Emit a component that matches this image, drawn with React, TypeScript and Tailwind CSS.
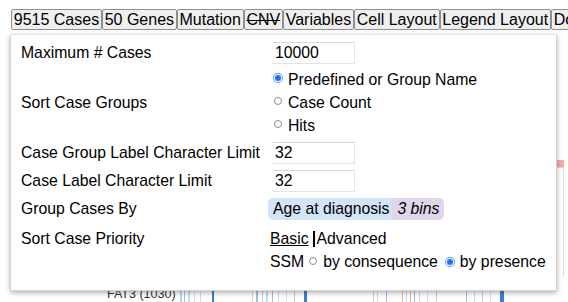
import React from "react";

const tabs = [
  { t: "9515 Cases" },
  { t: "50 Genes" },
  { t: "Mutation" },
  { t: "CNV", strike: true },
  { t: "Variables" },
  { t: "Cell Layout" },
  { t: "Legend Layout" },
  { t: "Download" },
];

function Radio({ checked }: { checked?: boolean }) {
  if (checked) {
    return (
      <span className="relative inline-flex w-[10px] h-[10px] shrink-0 rounded-full bg-[#5b9bf5] items-center justify-center -translate-y-[2px]">
        <span className="w-[8px] h-[8px] rounded-full bg-white flex items-center justify-center">
          <span className="w-[6px] h-[6px] rounded-full bg-[#1a73f0]" />
        </span>
      </span>
    );
  }
  return (
    <span className="inline-block w-[8px] h-[8px] shrink-0 rounded-full border border-[#8a8a8a] bg-white -translate-y-[2px]" />
  );
}

function Input({ v }: { v: string }) {
  return (
    <div className="ml-[2px] w-[83px] h-[22px] border border-[#e4e4e4] border-l-white border-t-[#d8d8d8] flex items-center pl-[2px] text-black">
      {v}
    </div>
  );
}

const bars = [
  [180, "#b9d3ef", 2], [184, "#9cc1ea", 1], [188, "#c9dcf2", 2], [194, "#d5e4f4", 1], [200, "#c9dcf2", 1], [212, "#3a7fd5", 2],
  [252, "#c9dcf2", 1], [256, "#9cc1ea", 2], [262, "#b9d3ef", 1], [266, "#c9dcf2", 2], [272, "#9cc1ea", 1], [278, "#c9dcf2", 1], [286, "#d5e4f4", 1], [294, "#b9d3ef", 1], [304, "#3a7fd5", 3],
  [373, "#f2c9b8", 1], [377, "#c9dcf2", 1], [386, "#9cc1ea", 1],
  [402, "#f0b49c", 1], [406, "#c9dcf2", 1], [410, "#f0b49c", 1], [414, "#9cc1ea", 1], [419, "#c9dcf2", 1], [427, "#d5e4f4", 1], [436, "#b9d3ef", 1],
  [466, "#9cc1ea", 1], [474, "#c9dcf2", 1], [482, "#b9d3ef", 1], [490, "#d5e4f4", 1], [500, "#3a7fd5", 4],
] as const;

export default function App() {
  return (
    <div className="relative w-[568px] h-[302px] bg-white overflow-hidden text-black" style={{ fontFamily: '"Liberation Sans", Arial, sans-serif' }}>
      {/* Tab bar */}
      <div className="flex pl-[11px] pt-[9px] whitespace-nowrap">
        {tabs.map((tab) => (
          <div
            key={tab.t}
            className={
              "h-[21px] px-[1.75px] border border-[#8f8f8f] rounded-[2px] bg-[#efefef] text-[16px] leading-[19px] text-black " +
              (tab.strike ? "line-through" : "")
            }
          >
            {tab.t}
          </div>
        ))}
      </div>

      {/* Background chart fragments */}
      <div className="absolute left-[107px] top-[287px] text-[12.5px] text-[#333] leading-[14px]">FAT3 (1030)</div>
      {bars.map(([x, c, w], i) => (
        <div key={i} className="absolute top-[290px] h-[12px]" style={{ left: x, width: w, background: c }} />
      ))}
      <div className="absolute left-[557px] top-[160px] w-[7px] h-[7px] bg-[#f6a9a9]" />
      <div className="absolute left-[563px] top-[167px] w-px h-[110px] bg-[#dcdcdc]" />
      <div className="absolute left-[557px] top-[167px] w-[7px] h-px bg-[#dcdcdc]" />

      {/* Popup */}
      <div className="absolute left-[10px] top-[34px] w-[547px] h-[257px] bg-white border border-[#d4d4d4] border-t-[#e6e6e6] shadow-[0_2px_5px_rgba(0,0,0,0.3)] pt-[4px] pl-[10px] text-[15.75px] leading-[18px]">
        <div className="grid grid-cols-[249px_1fr]">
          <div className="h-[28px] flex items-center">Maximum # Cases</div>
          <div className="h-[28px] flex items-center"><Input v="10000" /></div>

          <div className="h-[72px] flex items-center">Sort Case Groups</div>
          <div className="h-[72px] flex flex-col justify-center">
            {[
              ["Predefined or Group Name", true],
              ["Case Count", false],
              ["Hits", false],
            ].map(([t, c]) => (
              <div key={t as string} className="h-[23px] flex items-center pl-[3px]">
                <span className="w-[10px] flex justify-center"><Radio checked={c as boolean} /></span>
                <span className="ml-[5px]">{t as string}</span>
              </div>
            ))}
          </div>

          <div className="h-[28px] flex items-center">Case Group Label Character Limit</div>
          <div className="h-[28px] flex items-center"><Input v="32" /></div>

          <div className="h-[28px] flex items-center">Case Label Character Limit</div>
          <div className="h-[28px] flex items-center"><Input v="32" /></div>

          <div className="h-[28px] flex items-center">Group Cases By</div>
          <div className="h-[28px] flex items-center">
            <div className="flex h-[22px] rounded-[5px] overflow-hidden -ml-[2px]">
              <span className="bg-[#d2e4f6] pl-[5px] pr-[3px] flex items-center">Age at diagnosis</span>
              <span className="bg-[#dfd6ea] pl-[5px] pr-[4px] flex items-center italic">3 bins</span>
            </div>
          </div>

          <div className="pt-[4px]"><div className="h-[23px] flex items-center">Sort Case Priority</div></div>
          <div className="pt-[4px]">
            <div className="h-[23px] flex items-center">
              <span className="underline">Basic</span>
              <span className="ml-[4px] w-[2px] h-[16px] bg-black" />
              <span className="ml-[2px]">Advanced</span>
            </div>
            <div className="h-[23px] flex items-center">
              <span>SSM</span>
              <span className="ml-[5px]"><Radio /></span>
              <span className="ml-[6px]">by consequence</span>
              <span className="ml-[7px]"><Radio checked /></span>
              <span className="ml-[5px]">by presence</span>
            </div>
          </div>
        </div>
      </div>
    </div>
  );
}
